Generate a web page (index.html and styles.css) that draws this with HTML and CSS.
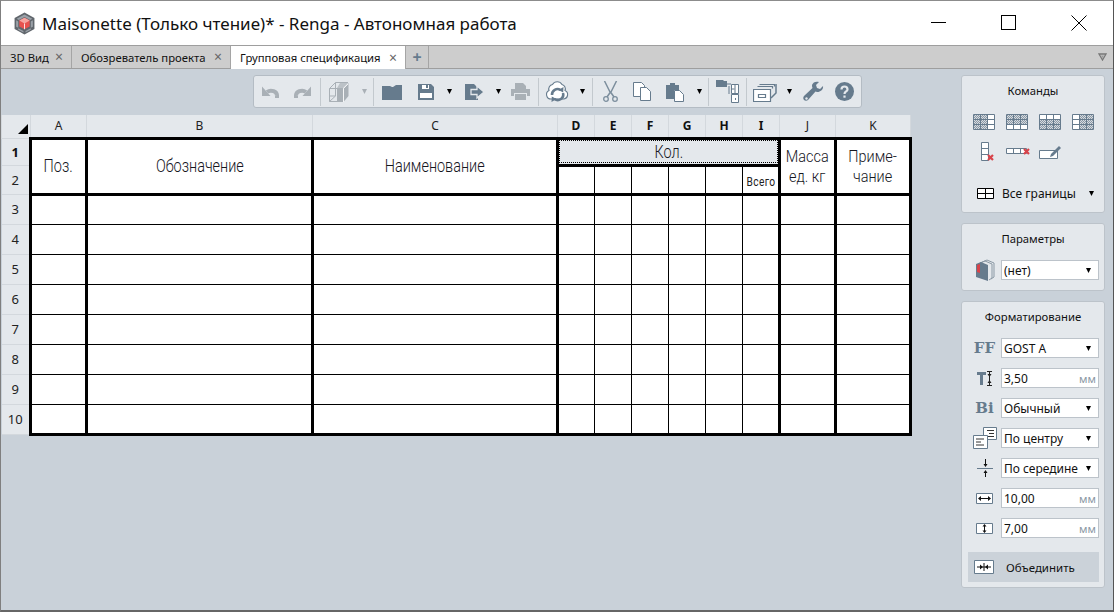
FILE: index.html
```html
<!DOCTYPE html>
<html lang="ru">
<head>
<meta charset="utf-8">
<title>Maisonette - Renga</title>
<link rel="stylesheet" href="styles.css">
</head>
<body>
<div class="window">
  <header class="titlebar">
    <svg class="logo" width="23" height="23" viewBox="0 0 22 22">
      <path d="M11 .5l9.500 5.200v10.600L11 21.500l-9.500-5.200V5.700z" fill="#60666c"/>
      <path d="M11 2.500l7.500 4-2 1.100L11 4.700 5.500 7.600l-2-1.100zM3 8l2 1v6l-2-1zM19 8l-2 1v6l2-1zM5 17l5 2.700v-1.500L5 15.500zM17 17l-5 2.700v-1.500l5-2.700z" fill="#9aa1a8"/>
      <path d="M11 5.500l5 2.700v5.600l-5 2.700-5-2.700V8.200z" fill="#e8524f"/>
      <path d="M11 5.500l5 2.700-5 2.700-5-2.700z" fill="#f7a5a0"/>
      <path d="M11 11v5.500" stroke="#fff" stroke-width=".8" fill="none"/>
    </svg>
    <h1 class="title">Maisonette (Только чтение)* - Renga - Автономная работа</h1>
    <div class="winctl">
      <svg width="16" height="16" viewBox="0 0 16 16"><path d="M0 7.500h15" stroke="#000" fill="none"/></svg>
      <svg width="16" height="16" viewBox="0 0 16 16"><rect x=".5" y=".5" width="14" height="14" stroke="#000" fill="none"/></svg>
      <svg width="16" height="16" viewBox="0 0 16 16"><path d="M.5.500l15 15M15.500.500l-15 15" stroke="#000" fill="none"/></svg>
    </div>
  </header>

  <nav class="tabs">
    <div class="tab tab-3d">3D Вид<span class="x">×</span></div>
    <div class="tab tab-obz">Обозреватель проекта<span class="x">×</span></div>
    <div class="tab tab-active">Групповая спецификация<span class="x">×</span></div>
    <div class="tab tab-plus">+</div>
    <svg class="tabmenu" width="9" height="8" viewBox="0 0 9 8"><path d="M1 1h7L4.500 7z" fill="none" stroke="#777" stroke-width="1.300"/><path d="M3 2.500h3L4.500 5z" fill="#999"/></svg>
  </nav>

  <main class="main">
    <section class="work">
      <div class="toolbar">
        <svg width="17" height="13" viewBox="0 0 17 13"><path d="M5 7a6 5 0 0 1 10 4" fill="none" stroke="#a9b0b6" stroke-width="4"/><path d="M0 1.500V11h8.500z" fill="#a9b0b6"/><path d="M13 11h4v2h-4z" fill="#a9b0b6"/></svg>
        <svg width="17" height="13" viewBox="0 0 17 13"><path d="M12 7A6 5 0 0 0 2 11" fill="none" stroke="#a9b0b6" stroke-width="4"/><path d="M17 1.500V11H8.500z" fill="#a9b0b6"/><path d="M0 11h4v2H0z" fill="#a9b0b6"/></svg>
        <i class="sep"></i>
        <svg width="20" height="20" viewBox="0 0 20 20"><path d="M8 6.500h6V20H8z" fill="#a9b0b6"/><path d="M14.500 6l5-5v13l-5 6z" fill="#a9b0b6"/><path d="M8 6h6l5-5h-8z" fill="#bcc2c7"/><path d="M.5 19.500v-13l6-6H19M.5 6.500H14M.5 19.500H14M6.500.500V14H.500M.5 19.500l6-5.500" fill="none" stroke="#a9b0b6"/><path d="M14.500 6.500V20M14.500 6.500L19 2" stroke="#fff" stroke-width=".8" fill="none"/></svg>
        <svg class="arr" width="5" height="5" viewBox="0 0 5 5"><path d="M0 0h5L2.500 5z" fill="#a9b0b6"/></svg>
        <i class="sep"></i>
        <svg width="20" height="16" viewBox="0 0 20 16"><path d="M0 16V3h11l3-2h6v15z" fill="#667b8d"/><path d="M0 2h10l-2 1H0z" fill="#667b8d"/></svg>
        <svg width="16" height="16" viewBox="0 0 16 16"><path d="M0 0h13l3 3v13H0z" fill="#667b8d"/><path d="M2 9h12v5H2zM4 1h7v4H4z" fill="#fff"/><path d="M8 1h2v3H8z" fill="#667b8d"/></svg>
        <svg class="arr" width="5" height="5" viewBox="0 0 5 5"><path d="M0 0h5L2.500 5z" fill="#000"/></svg>
        <svg width="20" height="16" viewBox="0 0 20 16"><path d="M0 0h9l4 4v12H0z" fill="#667b8d"/><path d="M6 5.500h6V2l7 6-7 6v-3.500H6z" fill="#667b8d" stroke="#e4e8ec" stroke-width="1.300"/></svg>
        <svg class="arr" width="5" height="5" viewBox="0 0 5 5"><path d="M0 0h5L2.500 5z" fill="#000"/></svg>
        <svg width="19" height="17" viewBox="0 0 19 17"><path d="M4 0h8l3 3v3H4z" fill="#a9b0b6"/><path d="M0 6h19v7h-3v-3H3v3H0z" fill="#a9b0b6"/><path d="M4 11h11v6H4z" fill="#a9b0b6"/></svg>
        <i class="sep"></i>
        <svg width="24" height="25" viewBox="0 0 24 25"><path d="M6 20a4.500 4.500 0 0 1-2-8.500A4.500 4.500 0 0 1 7.500 5.500a5.500 5.500 0 0 1 9.500 0 4.500 4.500 0 0 1 3 6A4.500 4.500 0 0 1 19 20z" fill="#fff" stroke="#667b8d" stroke-width="1.100"/><path d="M7 16a5.500 5.500 0 0 1 8.500-5M18 14a5.500 5.500 0 0 1-8.500 6" fill="none" stroke="#667b8d" stroke-width="2.600"/><path d="M18.500 8l-.3 5.500-4.700-2.500zM6.500 23l.3-5.500 4.700 2.500z" fill="#667b8d"/></svg>
        <svg class="arr" width="5" height="5" viewBox="0 0 5 5"><path d="M0 0h5L2.500 5z" fill="#000"/></svg>
        <i class="sep"></i>
        <svg width="15" height="21" viewBox="0 0 15 21"><path d="M1.500 0l6 12M13.500 0l-6 12M7.500 11l-3.500 5M7.500 11l3.500 5" stroke="#7c8e9d" stroke-width="1.500" fill="none"/><circle cx="3" cy="18" r="2.300" fill="none" stroke="#7c8e9d" stroke-width="1.300"/><circle cx="12" cy="18" r="2.300" fill="none" stroke="#7c8e9d" stroke-width="1.300"/></svg>
        <svg width="18" height="19" viewBox="0 0 18 19"><path d="M.5.500h8l3 3v11H.500z" fill="#fff" stroke="#667b8d"/><path d="M7.500 5.500h6l4 4v9h-10z" fill="#fff" stroke="#667b8d"/></svg>
        <svg width="18" height="20" viewBox="0 0 18 20"><path d="M0 3h4V1h5v2h4v5H8v9H0z" fill="#667b8d"/><path d="M8.500 8.500h5l4 4v7h-9z" fill="#fff" stroke="#667b8d"/></svg>
        <svg class="arr" width="5" height="5" viewBox="0 0 5 5"><path d="M0 0h5L2.500 5z" fill="#000"/></svg>
        <i class="sep"></i>
        <svg width="23" height="23" viewBox="0 0 23 23"><path d="M0 0h7l1 1h3v6H0z" fill="#667b8d"/><path d="M11 4h4M13 6v8" stroke="#667b8d" fill="none"/><path d="M15.500 4.500h7v9h-7zM19 5v8M15.500 9h3M15.500 14.500h7v8h-7zM19.500 18v2" fill="#fff" stroke="#667b8d"/></svg>
        <i class="sep"></i>
        <svg width="24" height="20" viewBox="0 0 24 20"><path d="M6.500 2.500h15v2M4.500 4.500h15v2" fill="none" stroke="#667b8d" stroke-width="1.200"/><path d="M.5 7.500h17v12h-17zM5.500 12.500h7v3h-7z" fill="#fff" stroke="#667b8d" stroke-width="1.200"/><path d="M18 16l5-5V2" fill="none" stroke="#667b8d" stroke-width="1.500"/></svg>
        <svg class="arr" width="5" height="5" viewBox="0 0 5 5"><path d="M0 0h5L2.500 5z" fill="#000"/></svg>
        <svg width="21" height="21" viewBox="0 0 21 21"><path d="M20 5l-3 3-3-1-1-3 3-3c-3-1-6 0-7 3 0 1 0 2 .5 3L1 15c-1 1-1 3 0 4s3 1 4 0l7.500-8.500c1 .5 2 .5 3 .5 3-1 5-3 4.500-6z" fill="#667b8d"/><circle cx="3.500" cy="17.500" r="1.200" fill="#e4e8ec"/></svg>
        <svg width="19" height="19" viewBox="0 0 19 19"><circle cx="9.500" cy="9.500" r="9.500" fill="#667b8d"/><path d="M6.500 7.500c0-4 6-4 6 0 0 2-3 2-3 4.500" fill="none" stroke="#e4e8ec" stroke-width="2.200"/><rect x="8.400" y="13.500" width="2.200" height="2.200" fill="#e4e8ec"/></svg>
      </div>

      <table class="sheet">
        <colgroup>
          <col class="c-h"><col class="c-a"><col class="c-b"><col class="c-c">
          <col class="c-n"><col class="c-n"><col class="c-n"><col class="c-n"><col class="c-n"><col class="c-n">
          <col class="c-j"><col class="c-k">
        </colgroup>
        <thead>
          <tr class="r-head">
            <th class="corner"><svg width="10" height="10" viewBox="0 0 10 10"><path d="M10 0v10H0z" fill="#000"/></svg></th>
            <th>A</th><th>B</th><th>C</th>
            <th class="on">D</th><th class="on">E</th><th class="on">F</th><th class="on">G</th><th class="on">H</th><th class="on">I</th>
            <th>J</th><th>K</th>
          </tr>
        </thead>
        <tbody>
          <tr class="r-1">
            <th class="on">1</th>
            <td rowspan="2"><span class="g">Поз.</span></td>
            <td rowspan="2"><span class="g">Обозначение</span></td>
            <td rowspan="2"><span class="g">Наименование</span></td>
            <td colspan="6" class="sel"><span class="selbox"><span class="g">Кол.</span></span></td>
            <td rowspan="2"><span class="g two">Масса<br>ед. кг</span></td>
            <td rowspan="2"><span class="g two">Приме-<br>чание</span></td>
          </tr>
          <tr class="r-2">
            <th>2</th>
            <td class="thin"></td><td class="thin"></td><td class="thin"></td><td class="thin"></td><td class="thin"></td>
            <td class="thin"><span class="g tiny">Всего</span></td>
          </tr>
          <tr class="first"><th>3</th><td></td><td></td><td></td><td class="thin"></td><td class="thin"></td><td class="thin"></td><td class="thin"></td><td class="thin"></td><td class="thin"></td><td></td><td></td></tr>
          <tr><th>4</th><td></td><td></td><td></td><td class="thin"></td><td class="thin"></td><td class="thin"></td><td class="thin"></td><td class="thin"></td><td class="thin"></td><td></td><td></td></tr>
          <tr><th>5</th><td></td><td></td><td></td><td class="thin"></td><td class="thin"></td><td class="thin"></td><td class="thin"></td><td class="thin"></td><td class="thin"></td><td></td><td></td></tr>
          <tr><th>6</th><td></td><td></td><td></td><td class="thin"></td><td class="thin"></td><td class="thin"></td><td class="thin"></td><td class="thin"></td><td class="thin"></td><td></td><td></td></tr>
          <tr><th>7</th><td></td><td></td><td></td><td class="thin"></td><td class="thin"></td><td class="thin"></td><td class="thin"></td><td class="thin"></td><td class="thin"></td><td></td><td></td></tr>
          <tr><th>8</th><td></td><td></td><td></td><td class="thin"></td><td class="thin"></td><td class="thin"></td><td class="thin"></td><td class="thin"></td><td class="thin"></td><td></td><td></td></tr>
          <tr><th>9</th><td></td><td></td><td></td><td class="thin"></td><td class="thin"></td><td class="thin"></td><td class="thin"></td><td class="thin"></td><td class="thin"></td><td></td><td></td></tr>
          <tr class="last"><th>10</th><td></td><td></td><td></td><td class="thin"></td><td class="thin"></td><td class="thin"></td><td class="thin"></td><td class="thin"></td><td class="thin"></td><td></td><td></td></tr>
        </tbody>
      </table>
    </section>

    <aside class="side">
      <section class="panel p-cmd">
        <h2>Команды</h2>
        <div class="cmd-grid">
          <svg width="22" height="16" viewBox="0 0 22 16"><use href="#grid"/><path d="M1 1h6v4H1zM8 1h6v4H8zM1 6h6v4H1zM8 6h6v4H8zM1 11h6v4H1zM8 11h6v4H8z" fill="url(#h)"/></svg>
          <svg width="22" height="16" viewBox="0 0 22 16"><use href="#grid"/><path d="M1 1h6v4H1zM8 1h6v4H8zM15 1h6v4h-6zM1 6h6v4H1zM8 6h6v4H8zM15 6h6v4h-6z" fill="url(#h)"/></svg>
          <svg width="22" height="16" viewBox="0 0 22 16"><use href="#grid"/><path d="M1 6h6v4H1zM8 6h6v4H8zM15 6h6v4h-6zM1 11h6v4H1zM8 11h6v4H8zM15 11h6v4h-6z" fill="url(#h)"/></svg>
          <svg width="22" height="16" viewBox="0 0 22 16"><use href="#grid"/><path d="M8 1h6v4H8zM15 1h6v4h-6zM8 6h6v4H8zM15 6h6v4h-6zM8 11h6v4H8zM15 11h6v4h-6z" fill="url(#h)"/></svg>
          <svg class="pad-l" width="14" height="20" viewBox="0 0 14 20"><path d="M.5.500h7v18h-7zM.5 6.500h7M.5 12.500h7" fill="#fff" stroke="#667b8d"/><path d="M7 13l5 5m0-5l-5 5" stroke="#d8434a" stroke-width="2.200" fill="none"/></svg>
          <svg width="24" height="12" viewBox="0 0 24 12"><path d="M.5 2.500h20v5H.500zM7.500 2.500v5M14.500 2.500v5" fill="#fff" stroke="#667b8d"/><path d="M18 3l5 5m0-5l-5 5" stroke="#d8434a" stroke-width="2.200" fill="none"/></svg>
          <svg width="23" height="14" viewBox="0 0 23 14"><path d="M.5 5.500h18v8H.500z" fill="#fff" stroke="#667b8d"/><path d="M11 12l1-3 8-8 2 2-8 8z" fill="#667b8d"/></svg>
        </div>
        <div class="border-row">
          <svg width="17" height="11" viewBox="0 0 17 11"><path d="M.5.500h16v10H.500zM.5 5.500h16M8.500.500v10" fill="#fff" stroke="#000"/></svg>
          <span>Все границы</span>
          <svg class="arr" width="5" height="5" viewBox="0 0 5 5"><path d="M0 0h5L2.500 5z" fill="#000"/></svg>
        </div>
      </section>

      <section class="panel p-par">
        <h2>Параметры</h2>
        <div class="field-row">
          <svg width="20" height="22" viewBox="0 0 20 22"><path d="M5 4l7-3 7 3v14l-3 2" fill="none" stroke="#8a98a4"/><path d="M3 5l7-3 7 3v14l-3 2" fill="none" stroke="#8a98a4"/><path d="M1 5l5-2 7 3v16l-12-4z" fill="#667b8d"/><path d="M2 6l3-1v9l-3-1z" fill="#d8434a"/></svg>
          <div class="sel-box">(нет)<svg class="arr" width="5" height="5" viewBox="0 0 5 5"><path d="M0 0h5L2.500 5z" fill="#000"/></svg></div>
        </div>
      </section>

      <section class="panel p-fmt">
        <h2>Форматирование</h2>
        <div class="field-row">
          <span class="ff">FF</span>
          <div class="sel-box">GOST A<svg class="arr" width="5" height="5" viewBox="0 0 5 5"><path d="M0 0h5L2.500 5z" fill="#000"/></svg></div>
        </div>
        <div class="field-row">
          <svg width="16" height="15" viewBox="0 0 16 15"><path d="M0 1h9v3H6v10H3V4H0z" fill="#667b8d"/><path d="M10 .500h5M10 14.500h5M12.500 1v13" stroke="#222" fill="none"/><path d="M10.500 3h4l-2 3zM10.500 12h4l-2-3z" fill="#222"/></svg>
          <div class="sel-box">3,50<span class="unit">мм</span></div>
        </div>
        <div class="field-row">
          <span class="ff bi">Bi</span>
          <div class="sel-box">Обычный<svg class="arr" width="5" height="5" viewBox="0 0 5 5"><path d="M0 0h5L2.500 5z" fill="#000"/></svg></div>
        </div>
        <div class="field-row">
          <svg width="24" height="22" viewBox="0 0 24 22"><path d="M10.500.500h13v12h-13z" fill="#fff" stroke="#667b8d"/><path d="M14 3.500h7M16 6.500h5M14 9.500h7" stroke="#333" fill="none"/><path d="M.5 8.500h14v13H.500z" fill="#fff" stroke="#667b8d"/><path d="M3 12h8M3 15h5M3 18h8" stroke="#333" fill="none"/></svg>
          <div class="sel-box">По центру<svg class="arr" width="5" height="5" viewBox="0 0 5 5"><path d="M0 0h5L2.500 5z" fill="#000"/></svg></div>
        </div>
        <div class="field-row">
          <svg width="16" height="18" viewBox="0 0 16 18"><path d="M0 9.500h16" stroke="#667b8d" fill="none"/><path d="M8.500 0v6M8.500 12v6" stroke="#111" fill="none"/><path d="M6.500 5h4l-2 3zM6.500 14h4l-2-3z" fill="#111"/></svg>
          <div class="sel-box">По середине<svg class="arr" width="5" height="5" viewBox="0 0 5 5"><path d="M0 0h5L2.500 5z" fill="#000"/></svg></div>
        </div>
        <div class="field-row">
          <svg width="17" height="11" viewBox="0 0 17 11"><path d="M.5.500h16v10H.500z" fill="#fff" stroke="#667b8d"/><path d="M3 5.500h11" stroke="#111" fill="none"/><path d="M5 3v5L2 5.500zM12 3v5l3-2.500z" fill="#111"/></svg>
          <div class="sel-box">10,00<span class="unit">мм</span></div>
        </div>
        <div class="field-row">
          <svg width="17" height="11" viewBox="0 0 17 11"><path d="M.5.500h16v10H.500z" fill="#fff" stroke="#667b8d"/><path d="M8.500 2v7" stroke="#111" fill="none"/><path d="M6.500 3.500h4L8.500 1zM6.500 7.500h4L8.500 10z" fill="#111"/></svg>
          <div class="sel-box">7,00<span class="unit">мм</span></div>
        </div>
        <div class="merge">
          <svg width="20" height="14" viewBox="0 0 20 14"><path d="M.5.500h19v13H.500z" fill="#fff" stroke="#667b8d"/><path d="M3 7h14M10 3v8" stroke="#111" fill="none"/><path d="M6 4.500v5l3-2.500zM14 4.500v5L11 7z" fill="#111"/></svg>
          <span>Объединить</span>
        </div>
      </section>
    </aside>
  </main>
</div>
<svg class="defs" width="0" height="0">
  <defs>
    <pattern id="h" width="2" height="2" patternUnits="userSpaceOnUse"><rect width="2" height="2" fill="#d6dbe0"/><rect width="1" height="1" fill="#8a98a5"/><rect x="1" y="1" width="1" height="1" fill="#8a98a5"/></pattern>
    <g id="grid"><path d="M.5.500h21v15H.500zM.5 5.500h21M.5 10.500h21M7.500.500v15M14.500.500v15" fill="#fff" stroke="#667b8d"/></g>
  </defs>
</svg>
</body>
</html>
```
FILE: styles.css
```css
* { box-sizing: border-box; }
html, body { margin: 0; height: 100%; overflow: hidden; }
body { font-family: "Noto Sans", "Open Sans", sans-serif; color: #111; background: #c9d1d9; }
.window {
  width: 1114px; height: 612px; display: flex; flex-direction: column;
  border: 1px solid #7f7f7f; border-top-color: #8c8c8c; border-right-color: #555; border-bottom-color: #666;
  border-bottom-width: 2px;
}
.titlebar { height: 44px; flex: none; display: flex; align-items: center; padding-left: 12px; background: #fff; }
.logo { flex: none; }
.title { margin: 0 0 0 6px; font-size: 17px; font-weight: 400; color: #111; white-space: nowrap; }
.winctl { margin-left: auto; display: flex; align-items: center; gap: 54px; padding-right: 26px; }

.tabs { height: 24px; flex: none; display: flex; background: #cdcdcd; border-top: 1px solid #9e9e9e; border-bottom: 1px solid #9e9e9e; font-size: 11.3px; position: relative; }
.tab { display: flex; align-items: center; border-right: 1px solid #a5a5a5; padding-left: 9px; white-space: nowrap; height: 22px; }
.tab-3d { width: 71px; }
.tab-obz { width: 159px; }
.tab-active { width: 175px; background: #fff; height: 23px; }
.tab-plus { width: 23px; padding: 0; justify-content: center; font-size: 16px; font-weight: 700; color: #667b8d; }
.x { margin-left: auto; margin-right: 8px; font-size: 14px; color: #666; line-height: 1; }
.tabmenu { position: absolute; right: 6px; top: 7px; }

.main { flex: 1; min-height: 0; display: flex; background: #c9d1d9; }
.work { flex: none; width: 960px; padding-top: 6px; }
.toolbar {
  margin-left: 252px; width: 609px; height: 33px; display: grid; align-items: center; justify-items: center;
  grid-template-columns: 32px 32px 5px 32px 18px 1px 36px 32px 14px 38px 8px 36px 1px 36px 14px 6px 30px 34px 32px 16px 2px 36px 2px 36px 12px 36px 26px;
  background: #e4e8ec; border: 1px solid #b4bcc4; border-radius: 3px;
}
.sep { display: block; width: 1px; height: 28px; background: #c3c9ce; }
.arr { flex: none; }

.sheet { margin-top: 7px; border-collapse: collapse; table-layout: fixed; width: 908px; }
.c-h { width: 29px; }
.c-a { width: 56px; }
.c-b { width: 226px; }
.c-c { width: 245px; }
.c-n { width: 37px; }
.c-j { width: 56px; }
.c-k { width: 75px; }
.sheet th { background: #e4e8ec; font-weight: 400; font-size: 12px; padding: 0; border: 1px solid #d3d8dd; color: #222; }
.sheet .on { font-weight: 700; color: #111; }
.r-head { height: 23px; }
.r-head th { border-top: 0; border-bottom: 0; }
.sheet tbody th { border-left: 0; font-size: 13px; }
.corner svg { display: block; margin: 6px 2px 0 auto; }
.sheet td { border: 1px solid #000; border-left-width: 3px; border-right-width: 3px; background: #fff; padding: 0; text-align: center; }
.r-1 { height: 27px; }
.r-2 { height: 29px; }
.sheet tbody tr:not(.r-1):not(.r-2) { height: 30px; }
.sheet .r-1 td, .sheet .r-2 td { border-bottom-width: 3px; border-top-width: 3px; }
.sheet .thin { border-left-width: 1px; border-right-width: 1px; }
.sheet .first td { border-top-width: 3px; }
.sheet .last td { border-bottom-width: 3px; }
.g {
  display: inline-block; font-family: Roboto, "Liberation Sans", sans-serif; font-weight: 300; font-size: 19px; line-height: 22px;
  color: #16161e; white-space: nowrap; transform: scaleX(.76);
}
.two { line-height: 20px; font-size: 17px; transform: scaleX(.85); }
.tiny { font-size: 12px; font-weight: 400; line-height: 14px; letter-spacing: .4px; transform: scaleX(.85); color: #222; }
.sheet .sel { background: #e4e8ec; }
.selbox { display: block; height: 23px; margin: 0; border: 1px dotted #000; line-height: 20px; background: #e4e8ec; }

.side { flex: none; width: 144px; padding-top: 6px; display: flex; flex-direction: column; gap: 10px; font-size: 12px; }
.panel { background: #e4e8ec; border: 1px solid #bcc3ca; border-radius: 3px; flex: none; }
.panel h2 { margin: 0; font-size: 11.3px; font-weight: 400; text-align: center; line-height: 16px; }
.p-cmd { height: 138px; padding-top: 7px; }
.p-par { height: 68px; padding-top: 7px; }
.p-fmt { height: 287px; padding-top: 7px; }
.p-fmt h2 { margin-bottom: 13px; }
.cmd-grid { margin-top: 15px; padding-left: 11px; display: grid; grid-template-columns: repeat(4, 33px); row-gap: 12px; align-items: center; justify-items: start; }
.pad-l { margin-left: 8px; }
.border-row { margin-top: 23px; padding: 0 10px 0 15px; display: flex; align-items: center; gap: 8px; }
.border-row .arr { margin-left: auto; }
.field-row { display: flex; height: 20px; margin: 10px 5px 0 0; align-items: center; justify-content: flex-end; position: relative; }
.p-fmt h2 + .field-row { margin-top: 0; }
.p-par .field-row { margin-top: 13px; }
.field-row > svg, .field-row > .ff { position: absolute; left: 6px; right: 98px; margin: auto; }
.sel-box { width: 98px; height: 20px; flex: none; background: #fff; border: 1px solid #bcc3ca; display: flex; align-items: center; justify-content: space-between; padding: 0 7px 0 2px; font-size: 12px; white-space: nowrap; }
.unit { color: #8b98a4; font-size: 11px; margin-right: -5px; }
.ff { text-align: center; font-family: "DejaVu Serif", serif; font-weight: 700; font-size: 15px; color: #667b8d; }
.merge { margin: 14px 5px 0 6px; height: 30px; background: #cbd2d9; display: flex; align-items: center; gap: 12px; padding-left: 6px; font-size: 11.5px; }
.defs { position: absolute; }
```
